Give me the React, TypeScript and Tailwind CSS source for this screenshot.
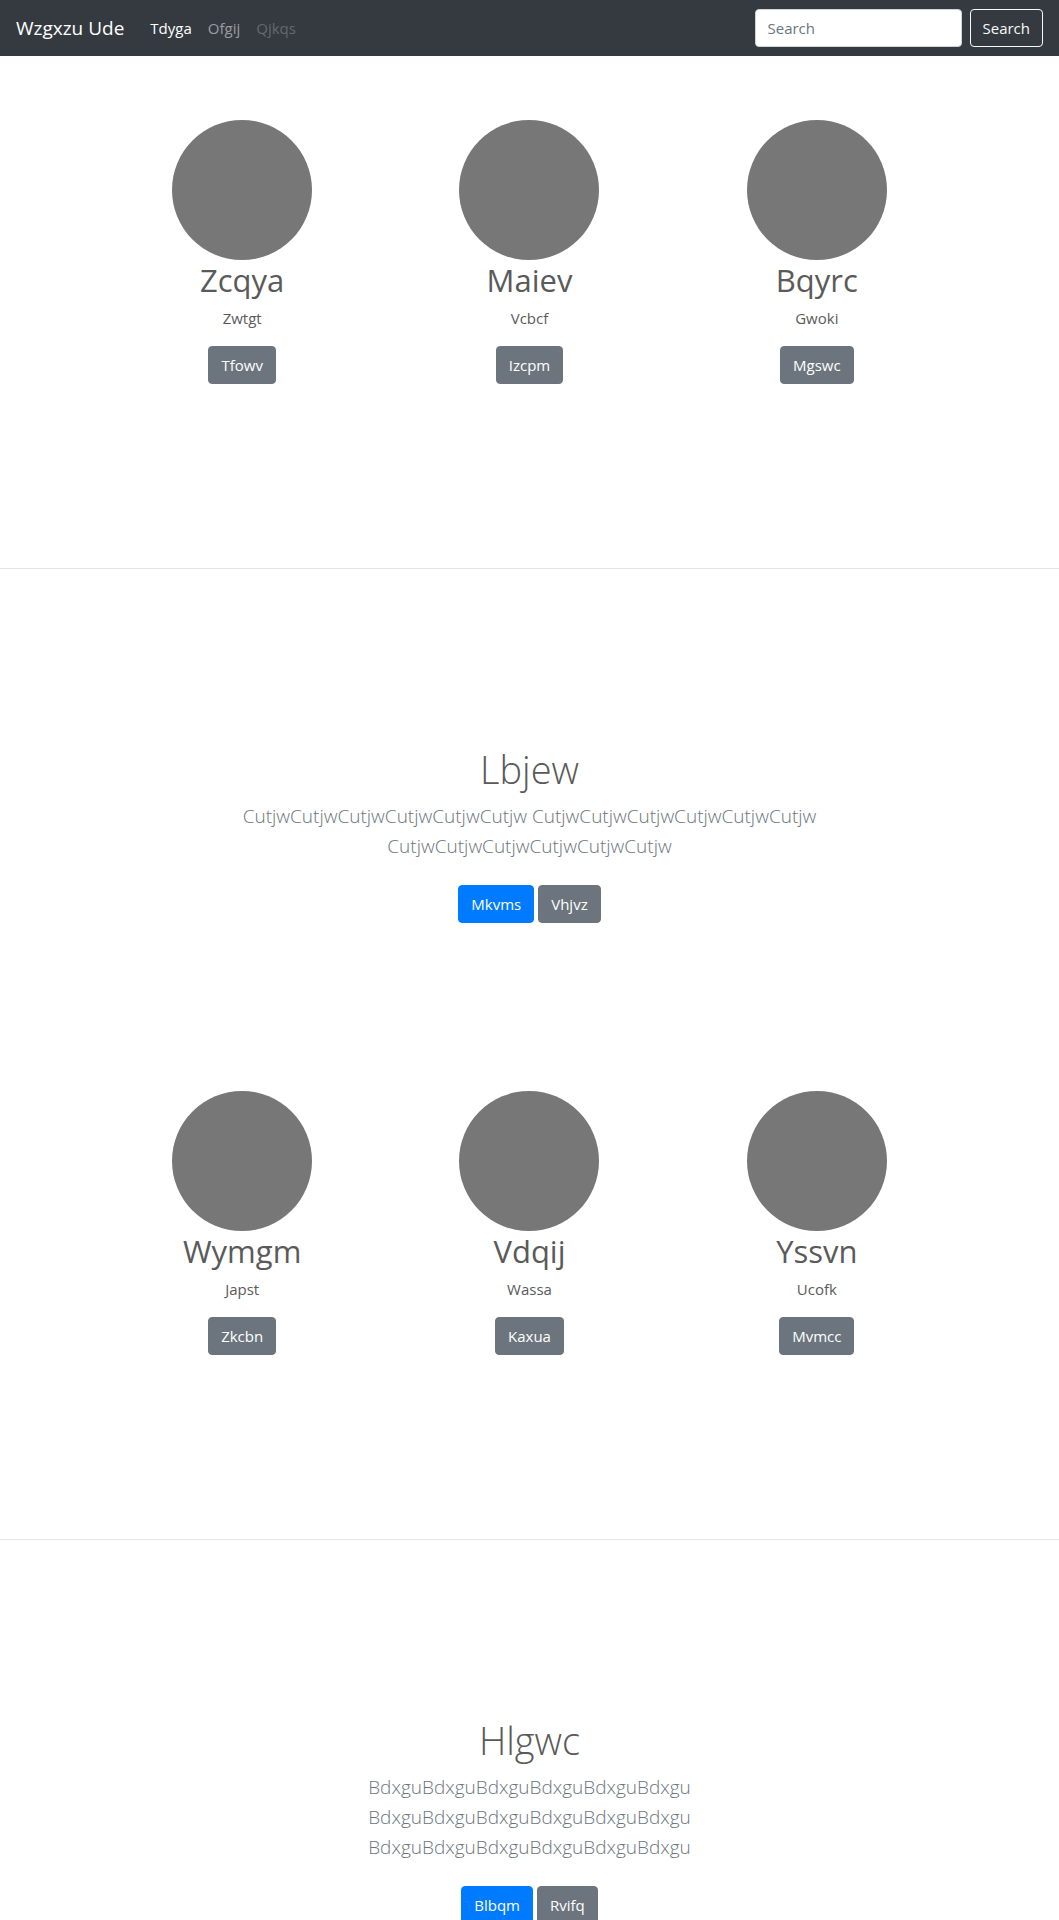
import React from "react";

type Feature = { title: string; text: string; action: string };

const firstRow: Feature[] = [
  { title: "Zcqya", text: "Zwtgt", action: "Tfowv" },
  { title: "Maiev", text: "Vcbcf", action: "Izcpm" },
  { title: "Bqyrc", text: "Gwoki", action: "Mgswc" },
];

const secondRow: Feature[] = [
  { title: "Wymgm", text: "Japst", action: "Zkcbn" },
  { title: "Vdqij", text: "Wassa", action: "Kaxua" },
  { title: "Yssvn", text: "Ucofk", action: "Mvmcc" },
];

function Button({ label, primary = false }: { label: string; primary?: boolean }) {
  return (
    <a
      href="#"
      className={
        primary
          ? "inline-block rounded border border-[#007bff] bg-[#007bff] px-3 py-1.5 leading-6 text-white"
          : "inline-block rounded border border-[#6c757d] bg-[#6c757d] px-3 py-1.5 leading-6 text-white"
      }
    >
      {label}
    </a>
  );
}

function Features({ items }: { items: Feature[] }) {
  return (
    <section className="mx-auto grid max-w-[862px] grid-cols-3 pb-46">
      {items.map((item) => (
        <div key={item.title} className="flex flex-col items-center text-center">
          <div className="size-35 rounded-full bg-[#777777]" />
          <h2 className="mb-1.5 text-[31px] leading-10">{item.title}</h2>
          <p className="mb-4 leading-6">{item.text}</p>
          <Button label={item.action} />
        </div>
      ))}
    </section>
  );
}

function Hero({
  title,
  text,
  primary,
  secondary,
}: {
  title: string;
  text: string;
  primary: string;
  secondary: string;
}) {
  return (
    <section className="border-t border-[#e5e5e5] px-4 pt-44 pb-42 text-center">
      <div className="mx-auto max-w-[610px]">
        <h1 className="mb-2 text-[38px] leading-[48px] font-light">{title}</h1>
        <p className="mb-4 text-[19px] leading-[30px] font-light text-[#6c757d]">{text}</p>
        <div className="flex justify-center gap-1 pt-2">
          <Button label={primary} primary />
          <Button label={secondary} />
        </div>
      </div>
    </section>
  );
}

export default function App() {
  return (
    <div className="bg-white font-['Open_Sans','Noto_Sans',sans-serif] text-[15px] text-[#5a5a5a]">
      <nav className="flex items-center bg-[#343a40] px-4 py-[9px]">
        <a href="#" className="mr-[26px] text-[19px] leading-[30px] text-white">
          Wzgxzu Ude
        </a>
        <div className="flex gap-4 leading-6">
          <a href="#" className="text-white">
            Tdyga
          </a>
          <a href="#" className="text-white/50">
            Ofgij
          </a>
          <a href="#" aria-disabled="true" className="text-white/25">
            Qjkqs
          </a>
        </div>
        <form className="ml-auto flex gap-2" onSubmit={(e) => e.preventDefault()}>
          <input
            type="search"
            aria-label="Search"
            placeholder="Search"
            className="h-[38px] w-[207px] rounded border border-[#ced4da] bg-white px-3 py-1.5 text-[#495057] placeholder:text-[#6c757d]"
          />
          <button
            type="submit"
            className="h-[38px] rounded border border-[#f8f9fa] px-3 leading-6 text-[#f8f9fa]"
          >
            Search
          </button>
        </form>
      </nav>
      <main className="pt-16">
        <Features items={firstRow} />
        <Hero
          title="Lbjew"
          text="CutjwCutjwCutjwCutjwCutjwCutjw CutjwCutjwCutjwCutjwCutjwCutjw CutjwCutjwCutjwCutjwCutjwCutjw"
          primary="Mkvms"
          secondary="Vhjvz"
        />
        <Features items={secondRow} />
        <Hero
          title="Hlgwc"
          text="BdxguBdxguBdxguBdxguBdxguBdxgu BdxguBdxguBdxguBdxguBdxguBdxgu BdxguBdxguBdxguBdxguBdxguBdxgu"
          primary="Blbqm"
          secondary="Rvifq"
        />
      </main>
    </div>
  );
}
